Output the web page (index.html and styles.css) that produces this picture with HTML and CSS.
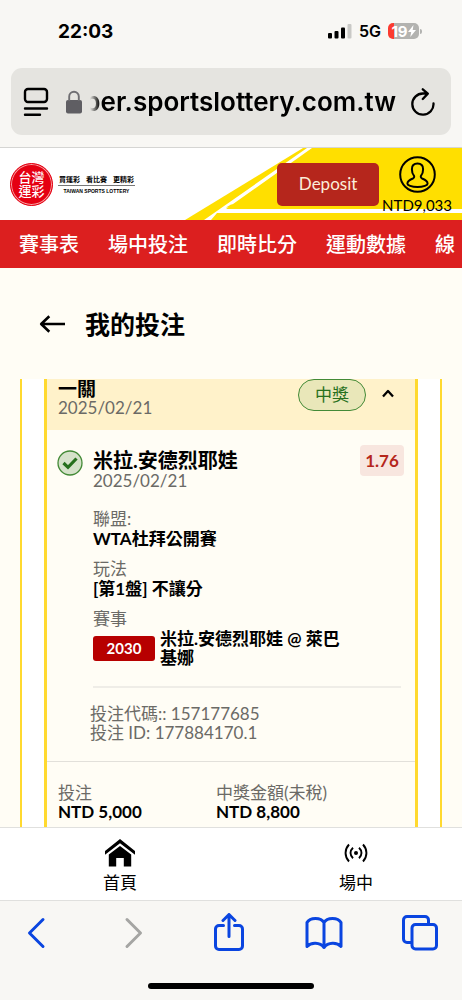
FILE: index.html
```html
<!DOCTYPE html>
<html lang="zh-Hant">
<head>
<meta charset="utf-8">
<meta name="viewport" content="width=device-width, initial-scale=1">
<title>我的投注</title>
<link rel="stylesheet" href="styles.css">
</head>
<body>
<div class="screen">
  <div class="status">
    <time class="clock">22:03</time>
    <div class="signals">
      <svg class="bars" width="24" height="15" viewBox="0 0 24 15" aria-hidden="true">
        <rect x="0" y="9" width="4" height="5.5" rx="1"/><rect x="6.500" y="7" width="4" height="7.500" rx="1"/><rect x="13" y="3.500" width="4" height="11" rx="1"/><rect x="19.500" y="0" width="4" height="14.500" rx="1" fill="#c9c9c6"/>
      </svg>
      <span class="network">5G</span>
      <div class="battery">
        <span>19</span>
        <svg width="8" height="12" viewBox="0 0 8 12" aria-hidden="true"><path d="M5.500 0 0 7h3.200L2.300 12 8 5H4.700z" fill="#fff"/></svg>
      </div>
    </div>
  </div>

  <div class="address">
    <button class="plain" aria-label="Page menu">
      <svg width="26" height="30" viewBox="0 0 26 30" fill="none" stroke="#000" stroke-width="2.400" stroke-linecap="round"><rect x="2" y="2" width="22" height="13" rx="3"/><path d="M2 21.500h22M2 27.800h15"/></svg>
    </button>
    <svg class="lock" width="16" height="24" viewBox="0 0 16 24" aria-hidden="true"><rect x="0" y="10" width="16" height="13.500" rx="2" fill="#5f5e63"/><path d="M3.200 11V6.500a4.800 4.800 0 0 1 9.600 0V11" fill="none" stroke="#6f6e72" stroke-width="1.900"/></svg>
    <div class="url"><span>member.sportslottery.com.tw</span></div>
    <button class="plain" aria-label="Reload">
      <svg width="24" height="28" viewBox="0 0 24 28" fill="none" stroke="#000" stroke-width="2.300" stroke-linecap="round" stroke-linejoin="round"><path d="M22.500 15.500A10.600 10.600 0 1 1 12 5.500h4.500M11.800 1.300l5 4.300-5 5.400"/></svg>
    </button>
  </div>

  <header class="site-header">
    <svg class="stripes" viewBox="0 0 462 72" preserveAspectRatio="xMaxYMid slice" aria-hidden="true">
      <path d="M185 72 303 0h159v72z" fill="#ffdf00"/>
      <path d="M204 72 307 0h5L226 61h236v4H217l-6 7z" fill="#fff"/>
      <path d="M226 59.500 231 56.500h4l-4 3z" fill="#ffdf00"/>
    </svg>
    <a class="brand" href="#">
      <span class="seal"><span>台灣</span><span>運彩</span></span>
      <span class="tagline"><span class="slogan"><span>買運彩</span><span>看比賽</span><span>更精彩</span></span><span class="english">TAIWAN SPORTS LOTTERY</span></span>
    </a>
    <button class="deposit">Deposit</button>
    <a class="account" href="#">
      <svg width="37" height="37" viewBox="0 0 37 37" fill="none" stroke="#000" stroke-width="2" aria-hidden="true"><circle cx="18.500" cy="18.500" r="17.300"/><path d="M18.500 7.600c-3.500 0-5.600 2.300-5.600 5.600 0 2.900.8 5 2 6.400.7 1.100.2 2.400-1 2.900-3.200 1.200-5.500 2.600-5.500 5.200 0 1.300 4 3.300 10.100 3.300s10.100-2 10.100-3.300c0-2.600-2.300-4-5.500-5.200-1.200-.5-1.700-1.800-1-2.900 1.200-1.400 2-3.500 2-6.400 0-3.300-2.100-5.600-5.600-5.600z"/></svg>
      <span>NTD9,033</span>
    </a>
  </header>

  <nav class="menu">
    <a href="#">賽事表</a><a href="#">場中投注</a><a href="#">即時比分</a><a href="#">運動數據</a><a href="#">線</a>
  </nav>

  <div class="title">
    <button class="plain" aria-label="返回">
      <svg width="27" height="18" viewBox="0 0 27 18" fill="none" stroke="#000" stroke-width="2.600" stroke-linejoin="round"><path d="M26 9H2.500M10.300 1.200 2.200 9l8.100 7.800"/></svg>
    </button>
    <h1>我的投注</h1>
  </div>

  <main class="bets">
    <div class="frame">
      <article class="card">
        <header class="card-head">
          <div>
            <h2>一關</h2>
            <time class="date">2025/02/21</time>
          </div>
          <span class="won">中獎</span>
          <button class="plain" aria-label="收合">
            <svg width="12" height="9" viewBox="0 0 12 9" fill="none" stroke="#000" stroke-width="2.300" stroke-linejoin="round"><path d="M1 7.500 6 2l5 5.500"/></svg>
          </button>
        </header>

        <section class="selection">
          <svg class="tick" width="26" height="26" viewBox="0 0 26 26" fill="none" aria-hidden="true"><circle cx="13" cy="13" r="12" fill="#d6e2ca" stroke="#438a36" stroke-width="1.300"/><path d="M6.500 13l4.500 4.300L19.500 8.500" stroke="#27701d" stroke-width="3.200"/></svg>
          <div class="pick">
            <div class="pick-head">
              <div>
                <h3>米拉.安德烈耶娃</h3>
                <time class="date">2025/02/21</time>
              </div>
              <strong class="odds">1.76</strong>
            </div>
            <dl class="facts">
              <dt>聯盟:</dt><dd>WTA杜拜公開賽</dd>
              <dt>玩法</dt><dd>[第1盤] 不讓分</dd>
              <dt>賽事</dt><dd class="match"><span class="code">2030</span><span>米拉.安德烈耶娃 @ 萊巴基娜</span></dd>
            </dl>
            <p class="ids">投注代碼:: 157177685<br>投注 ID: 177884170.1</p>
          </div>
        </section>

        <dl class="totals">
          <div><dt>投注</dt><dd>NTD 5,000</dd></div>
          <div><dt>中獎金額(未稅)</dt><dd>NTD 8,800</dd></div>
        </dl>
      </article>
    </div>
  </main>

  <nav class="tabs">
    <a href="#">
      <svg width="30" height="28" viewBox="0 0 30 28" aria-hidden="true"><path d="M15 0 30 12v3.800L15 4.300 0 15.800V12z"/><path d="M15 7 26.200 15.500V27.500H18.800V19H11.200v8.500H3.800V15.500z"/></svg>
      <span>首頁</span>
    </a>
    <a href="#">
      <svg width="24" height="28" viewBox="0 0 24 28" fill="none" stroke="#000" stroke-width="1.900" aria-hidden="true"><circle cx="12" cy="14" r="2" fill="#000" stroke="none"/><path d="M5 5.500c-4.600 5-4.600 12 0 17M19 5.500c4.600 5 4.600 12 0 17M9 8.800c-3.300 3.100-3.300 7.300 0 10.400M15 8.800c3.300 3.100 3.300 7.300 0 10.400"/></svg>
      <span>場中</span>
    </a>
  </nav>

  <div class="toolbar">
    <button class="plain" aria-label="Back"><svg width="34" height="40" viewBox="0 0 34 40"><path d="M23 6.500 9.500 20 23 33.500"/></svg></button>
    <button class="plain off" aria-label="Forward"><svg width="34" height="40" viewBox="0 0 34 40"><path d="M11 6.500 24.500 20 11 33.500"/></svg></button>
    <button class="plain" aria-label="Share"><svg width="34" height="40" viewBox="0 0 34 40"><path d="M11.500 12.500H7a3.500 3.500 0 0 0-3.500 3.500v17A3.500 3.500 0 0 0 7 36.500h20a3.500 3.500 0 0 0 3.500-3.500V16a3.500 3.500 0 0 0-3.500-3.500h-4.500M17 23.500V2M11 7.500 17 1.500l6 6"/></svg></button>
    <button class="plain" aria-label="Bookmarks"><svg width="38" height="40" viewBox="0 0 38 40"><path d="M19 34.500V9.500C16 4 5 4 2 9.500v24c4-4.500 13-4.500 17 1 4-5.500 13-5.500 17-1v-24C33 4 22 4 19 9.500"/></svg></button>
    <button class="plain" aria-label="Tabs"><svg width="38" height="40" viewBox="0 0 38 40"><path d="M10 29.500H6A3.500 3.500 0 0 1 2.500 26V7A3.500 3.500 0 0 1 6 3.500h18A3.500 3.500 0 0 1 27.500 7v4"/><rect x="11" y="11.500" width="24.500" height="24.500" rx="3.500"/></svg></button>
  </div>
  <div class="home-bar"></div>
</div>
</body>
</html>
```
FILE: styles.css
```css
* { box-sizing: border-box; }
body, h1, h2, h3, p, dl, dd { margin: 0; }
body {
  background: #f8f7f4;
  color: #000;
  font-family: Lato, "Noto Sans CJK TC", sans-serif;
}
a { color: inherit; text-decoration: none; }
svg { display: block; flex: none; }
.plain { display: flex; justify-content: center; padding: 0; border: 0; background: none; flex: none; }

.screen { display: flex; flex-direction: column; height: 100vh; overflow: hidden; }

.status {
  display: flex;
  align-items: center;
  justify-content: space-between;
  height: 62px;
  flex: none;
  padding: 0 41px 0 58px;
  font-family: Inter, sans-serif;
}
.clock { font-size: 19px; font-weight: 700; }
.signals { display: flex; align-items: center; }
.network { margin: 0 7px 0 7px; font-size: 16px; font-weight: 600; }
.battery {
  position: relative;
  display: flex;
  align-items: center;
  justify-content: center;
  width: 31px;
  height: 16px;
  margin-right: 2px;
  border-radius: 5px;
  background: linear-gradient(90deg, #fb3b30 6px, #b3b3b0 6px);
  color: #fff;
  font-size: 15px;
  font-weight: 700;
}
.battery::after {
  content: "";
  position: absolute;
  right: -3px;
  width: 2px;
  height: 5px;
  border-radius: 0 2px 2px 0;
  background: #b3b3b0;
}

.address {
  display: flex;
  align-items: center;
  height: 67px;
  flex: none;
  margin: 6px 11px 12px;
  padding: 0 16px 0 12px;
  border-radius: 11px;
  background: #e5e4e0;
}
.lock { margin-left: 17px; }
.url {
  display: flex;
  flex: 1;
  justify-content: flex-end;
  overflow: hidden;
  margin: 0 15px 0 8px;
  font: 600 26px/36px Inter, sans-serif;
  -webkit-mask-image: linear-gradient(90deg, transparent, #000 10px);
  mask-image: linear-gradient(90deg, transparent, #000 10px);
}

.site-header {
  position: relative;
  display: flex;
  align-items: center;
  height: 73px;
  flex: none;
  padding: 0 10px;
  border-top: 1px solid #d5d5d3;
  background: #fff;
}
.stripes { position: absolute; inset: 0; width: 100%; height: 100%; }
.brand { position: relative; display: flex; align-items: center; gap: 5px; margin-right: auto; }
.seal {
  display: flex;
  flex-direction: column;
  align-items: center;
  justify-content: center;
  width: 43px;
  height: 43px;
  border: 1px solid #e50012;
  border-radius: 50%;
  background: #e50012;
  box-shadow: inset 0 0 0 1px #f7a5a5;
  color: #fff;
  font: 500 13px/14px "Noto Sans CJK TC", sans-serif;
}
.tagline { display: flex; flex-direction: column; width: 77px; }
.slogan {
  display: flex;
  justify-content: space-between;
  padding: 0 1px 1px;
  border-bottom: 1px solid #777;
  font: 700 7px/10px "Noto Sans CJK TC", sans-serif;
}
.english { padding-top: 1px; text-align: center; white-space: nowrap; font: 700 5px/8px "Liberation Sans", sans-serif; }
.deposit {
  position: relative;
  width: 102px;
  height: 43px;
  border: 0;
  border-radius: 5px;
  background: #b5261c;
  color: #fbeeda;
  font: 400 17px/24px Lato, sans-serif;
}
.account {
  position: relative;
  display: flex;
  flex-direction: column;
  align-items: center;
  gap: 4px;
  margin-left: 3px;
  font-size: 15px;
  line-height: 16px;
}

.menu {
  display: flex;
  align-items: center;
  gap: 29px;
  height: 48px;
  flex: none;
  overflow: hidden;
  padding-left: 19px;
  background: #dc1f1f;
  color: #fff;
  font-size: 20px;
  font-weight: 500;
  line-height: 30px;
  white-space: nowrap;
}

.title {
  display: flex;
  align-items: center;
  gap: 19px;
  height: 111px;
  flex: none;
  padding-left: 39px;
  background: #fffdf5;
}
.title h1 { font-size: 25px; font-weight: 700; line-height: 36px; }

.bets { flex: 1; min-height: 0; overflow: hidden; padding: 0 20px; background: #fffdf5; }
.frame { height: 100%; padding: 0 22px; border: solid #ffd92f; border-width: 0 2px; background: #fff; }
.card { height: 100%; border: solid #ffd92f; border-width: 0 3px; background: #fffdf5; }
.card-head {
  display: flex;
  align-items: flex-start;
  height: 51px;
  padding: 0 21px 0 11px;
  background: #fff2ca;
}
.card-head > div { margin-right: auto; }
.card-head h2 { font-size: 19px; font-weight: 700; line-height: 19px; }
.date { display: block; color: #6b6a66; font-size: 17px; line-height: 20px; }
.won {
  width: 68px;
  height: 32px;
  border: 1px solid #438a36;
  border-radius: 16px;
  background: #e9e7b9;
  color: #27701d;
  font-size: 17px;
  line-height: 30px;
  text-align: center;
}
.card-head button { margin: 10px 0 0 16px; }

.selection { display: flex; gap: 10px; padding: 20px 11px 19px 10px; border-bottom: 1px solid #e2e0da; }
.pick { flex: 1; }
.pick-head { display: flex; justify-content: space-between; align-items: flex-start; }
.pick h3 { font-size: 20px; font-weight: 700; line-height: 21px; }
.odds {
  width: 44px;
  margin-top: -5px;
  border-radius: 4px;
  background: #f8e6df;
  color: #b5261c;
  font-size: 17px;
  line-height: 31px;
  text-align: center;
}
.facts { margin-right: 3px; padding: 17px 0 19px; border-bottom: 2px solid #efede7; font-size: 17px; }
.facts dt { color: #6b6a66; line-height: 21px; }
.facts dd { margin-bottom: 9px; font-weight: 700; line-height: 20px; }
.facts .match { display: flex; align-items: center; gap: 5px; margin: 0; padding-right: 52px; line-height: 19px; }
.code { width: 62px; flex: none; border-radius: 3px; background: #b70000; color: #fff; font-size: 15px; line-height: 25px; text-align: center; }
.ids { margin: 16px 0 0 -3px; color: #6b6a66; font-size: 17px; line-height: 19px; }

.totals { display: grid; grid-template-columns: 158px 1fr; padding: 21px 11px 0; font-size: 17px; line-height: 19px; }
.totals dt { color: #6b6a66; }
.totals dd { font-weight: 700; }

.tabs {
  display: flex;
  justify-content: space-between;
  height: 74px;
  flex: none;
  padding: 11px 89px 0 103px;
  border: solid #e0e0de;
  border-width: 1px 0;
  background: #fff;
  font-size: 17px;
  line-height: 24px;
}
.tabs a { display: flex; flex-direction: column; align-items: center; gap: 4px; }

.toolbar { display: flex; align-items: center; justify-content: space-between; flex: none; height: 63px; padding: 0 23px 0 18px; }
.toolbar .plain { width: 38px; }
.toolbar svg { fill: none; stroke: #0a45e0; stroke-width: 3; stroke-linecap: round; stroke-linejoin: round; }
.toolbar .off svg { stroke: #a5a5a3; }
.home-bar { width: 166px; height: 6px; flex: none; margin: 19px auto 11px; border-radius: 3px; background: #000; }
```
